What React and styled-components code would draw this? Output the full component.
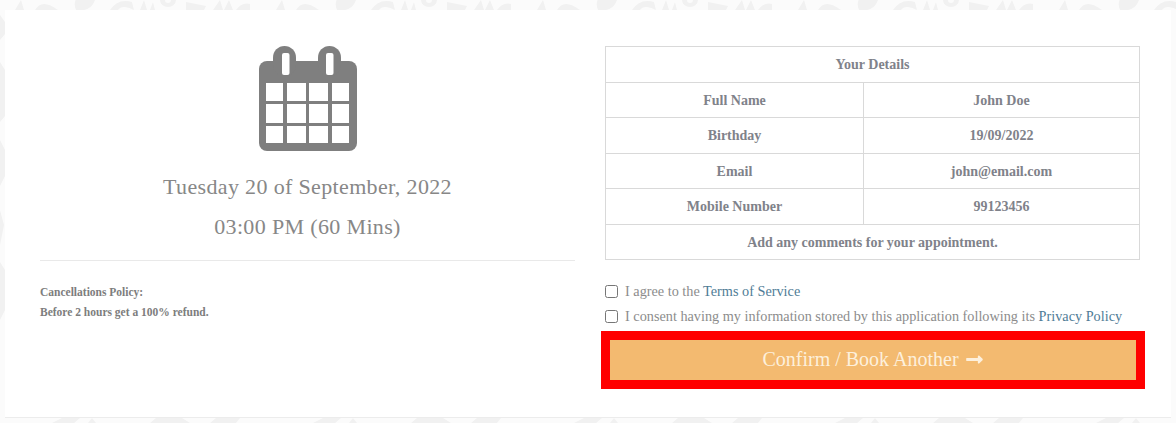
import React from "react";
import styled, { createGlobalStyle } from "styled-components";
import { FaLongArrowAltRight } from "react-icons/fa";

const motif = `<svg xmlns='http://www.w3.org/2000/svg' width='261' height='423'><g fill='#f1f1f1'>
<path d='M15 10 L21 0 L24 10Z'/><path d='M35 10 Q42 -2 58 10Z'/><path d='M76 10 Q72 0 80 -4 L96 -4 Q94 8 84 10Z'/>
<path d='M110 10 Q118 -2 132 2 L134 10 Q122 4 118 10Z'/><path d='M140 10 L144 0 L147 10Z M150 10 L153 2 L155 10Z'/>
<path d='M160 0 A8 7 0 0 0 176 0 L171 0 A3 3 0 0 1 165 0Z'/><path d='M186 2 L206 6 L204 10 L186 10Z'/>
<path d='M213 10 L220 0 L223 10Z M224 10 L229 0 L233 10Z'/><path d='M236 10 Q242 2 250 4 L250 10Z'/>
<path d='M0 15 L5 22 L5 34 L0 40Z M0 62 L5 70 L5 116 L0 122Z M0 140 L5 150 L5 176 L0 186Z M0 210 L4 225 L0 245Z M0 262 L5 270 L5 310 L0 320Z'/>
<path d='M52 423 L62 418 L80 418 L74 423Z M88 423 L92 418 L96 423Z M150 423 L156 418 L182 418 L190 423Z M210 423 L216 418 L240 418 L236 423Z'/>
</g></svg>`;

const GlobalStyle = createGlobalStyle`
  html, body {
    margin: 0;
    height: 100%;
    overflow: hidden;
    background: #fbfbfb url("data:image/svg+xml,${encodeURIComponent(motif)}") repeat-x 0 0;
  }
  * {
    box-sizing: border-box;
  }
`;

const Card = styled.main`
  margin: 10px 5px 0;
  width: 1166px;
  height: 408px;
  padding: 36px 31px 0 35px;
  background: #fff;
  border-bottom: 1px solid #ececec;
  display: grid;
  grid-template-columns: 535px 535px;
  column-gap: 30px;
  font-family: "Liberation Serif", "Times New Roman", serif;
  font-variant-numeric: oldstyle-nums;
`;

const Summary = styled.section`
  display: flex;
  flex-direction: column;
  align-items: center;
`;

const CalendarIcon = styled.svg`
  display: block;
  width: 98px;
  height: 105px;
`;

const DateLine = styled.div`
  margin-top: ${(p) => p.$top}px;
  height: 24px;
  line-height: 24px;
  font-size: 22px;
  letter-spacing: 0.35px;
  color: #878787;
  white-space: nowrap;
`;

const Divider = styled.hr`
  align-self: stretch;
  margin: 21px 0 0;
  border: 0;
  border-top: 1px solid #e9e9e9;
`;

const Policy = styled.div`
  align-self: stretch;
  margin-top: 21px;
  font-size: 11.5px;
  font-weight: 700;
  line-height: 20px;
  color: #7d7d7d;
`;

const Details = styled.section`
  display: flex;
  flex-direction: column;
`;

const Table = styled.table`
  width: 535px;
  table-layout: fixed;
  border-collapse: collapse;
  font-size: 14px;
  font-weight: 700;
  color: #7f828a;
`;

const NameColumn = styled.col`
  width: 258px;
`;

const Cell = styled.td`
  height: 35.5px;
  padding: 2px 0 0;
  text-align: center;
  border: 1px solid #d9d9d9;
`;

const Agreement = styled.label`
  display: flex;
  align-items: center;
  gap: 7px;
  height: 25px;
  font-size: 14.25px;
  color: #8c8c8c;
  white-space: nowrap;

  input {
    width: 13px;
    height: 13px;
    margin: 0;
  }
`;

const Agreements = styled.div`
  margin-top: 19px;
`;

const Link = styled.a`
  color: #4f7c96;
`;

const ConfirmButton = styled.button`
  margin: 2px -5px 0 -4px;
  width: 544px;
  height: 58px;
  padding: 0 0 2px;
  border: 9px solid #ff0000;
  background: #f3ba70;
  color: #fdf0dc;
  font-family: inherit;
  font-size: 20px;
  display: flex;
  align-items: center;
  justify-content: center;
  gap: 6px;
`;

const rows = [
  ["Full Name", "John Doe"],
  ["Birthday", "19/09/2022"],
  ["Email", "john@email.com"],
  ["Mobile Number", "99123456"],
];

const cellX = [[7, 17], [28, 19], [50, 19], [73, 17]];
const cellY = [[37, 18], [58, 19], [80, 17]];

function Calendar() {
  return (
    <CalendarIcon viewBox="0 0 98 105">
      <g fill="#7f7f7f">
        <rect x="0" y="15" width="98" height="90" rx="8" />
        <rect x="14" y="0" width="23" height="30" rx="11.5" />
        <rect x="59" y="0" width="23" height="30" rx="11.5" />
      </g>
      <g fill="#fff">
        <rect x="23" y="7" width="7.5" height="22" rx="2" />
        <rect x="67" y="7" width="7.5" height="22" rx="2" />
        {cellY.map(([y, h]) =>
          cellX.map(([x, w]) => <rect key={x + "-" + y} x={x} y={y} width={w} height={h} />)
        )}
      </g>
    </CalendarIcon>
  );
}

export default function App() {
  return (
    <>
      <GlobalStyle />
      <Card>
        <Summary>
          <Calendar />
          <DateLine $top={24}>Tuesday 20 of September, 2022</DateLine>
          <DateLine $top={16}>03:00 PM (60 Mins)</DateLine>
          <Divider />
          <Policy>
            Cancellations Policy:
            <br />
            Before 2 hours get a 100% refund.
          </Policy>
        </Summary>
        <Details>
          <Table>
            <colgroup>
              <NameColumn />
              <col />
            </colgroup>
            <tbody>
              <tr>
                <Cell colSpan={2}>Your Details</Cell>
              </tr>
              {rows.map(([name, value]) => (
                <tr key={name}>
                  <Cell>{name}</Cell>
                  <Cell>{value}</Cell>
                </tr>
              ))}
              <tr>
                <Cell colSpan={2}>Add any comments for your appointment.</Cell>
              </tr>
            </tbody>
          </Table>
          <Agreements>
            <Agreement>
              <input type="checkbox" />
              <span>
                I agree to the <Link>Terms of Service</Link>
              </span>
            </Agreement>
            <Agreement>
              <input type="checkbox" />
              <span>
                I consent having my information stored by this application following its{" "}
                <Link>Privacy Policy</Link>
              </span>
            </Agreement>
          </Agreements>
          <ConfirmButton>
            Confirm / Book Another <FaLongArrowAltRight size={19} />
          </ConfirmButton>
        </Details>
      </Card>
    </>
  );
}
